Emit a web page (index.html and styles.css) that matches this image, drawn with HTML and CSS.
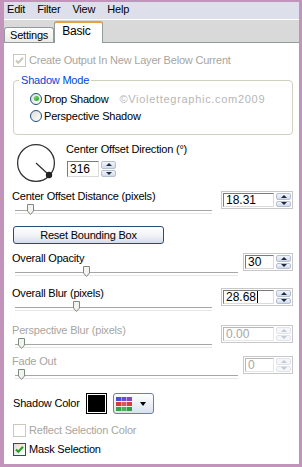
FILE: index.html
```html
<!DOCTYPE html>
<html lang="en">
<head>
  <meta charset="UTF-8">
  <meta name="viewport" content="width=device-width, initial-scale=1.0">
  <title>Drop Shadow - Basic</title>
  <link rel="stylesheet" href="styles.css">
</head>
<body>
  <div class="window">
    <div class="menubar">
      <span>Edit</span>
      <span>Filter</span>
      <span>View</span>
      <span>Help</span>
    </div>

    <div class="tabstrip">
      <div class="tab">Settings</div>
      <div class="tab active">Basic</div>
    </div>

    <div class="panel">
      <div class="check-row disabled">
        <span class="check">
          <svg viewBox="0 0 11 11"><path d="M2 5.5L4.3 7.8L9 2.8"/></svg>
        </span>
        <span>Create Output In New Layer Below Current</span>
      </div>

      <fieldset class="group">
        <legend>Shadow Mode</legend>
        <div class="radio-list">
          <div class="radio-row">
            <span class="radio on"></span>
            <span>Drop Shadow</span>
            <span class="watermark">©Violettegraphic.com2009</span>
          </div>
          <div class="radio-row">
            <span class="radio"></span>
            <span>Perspective Shadow</span>
          </div>
        </div>
      </fieldset>

      <div class="direction">
        <svg class="dial" viewBox="0 0 40 40">
          <circle cx="20" cy="20" r="18.4"/>
          <line x1="20" y1="20" x2="33" y2="32"/>
          <circle class="knob" cx="33" cy="32" r="3.2"/>
        </svg>
        <div class="direction-fields">
          <div class="label">Center Offset Direction (°)</div>
          <div class="spin dir">
            <div class="spin-value">316</div>
            <div class="spin-buttons"><span class="spin-btn up"></span><span class="spin-btn down"></span></div>
          </div>
        </div>
      </div>

      <div class="field wide distance">
        <div class="field-main">
          <div class="label">Center Offset Distance (pixels)</div>
          <div class="slider"><span class="thumb" style="left: 12px"><svg viewBox="0 0 7 11"><path d="M0.5 0.5H6.5V7L3.5 10.5L0.5 7Z"/></svg></span></div>
        </div>
        <div class="spin">
          <div class="spin-value">18.31</div>
          <div class="spin-buttons"><span class="spin-btn up"></span><span class="spin-btn down"></span></div>
        </div>
      </div>

      <button class="reset-button">Reset Bounding Box</button>

      <div class="field narrow opacity">
        <div class="field-head">
          <div class="label">Overall Opacity</div>
          <div class="spin">
            <div class="spin-value">30</div>
            <div class="spin-buttons"><span class="spin-btn up"></span><span class="spin-btn down"></span></div>
          </div>
        </div>
        <div class="slider"><span class="thumb" style="left: 68px"><svg viewBox="0 0 7 11"><path d="M0.5 0.5H6.5V7L3.5 10.5L0.5 7Z"/></svg></span></div>
      </div>

      <div class="field wide blur">
        <div class="field-main">
          <div class="label">Overall Blur (pixels)</div>
          <div class="slider"><span class="thumb" style="left: 58px"><svg viewBox="0 0 7 11"><path d="M0.5 0.5H6.5V7L3.5 10.5L0.5 7Z"/></svg></span></div>
        </div>
        <div class="spin">
          <div class="spin-value">28.68<span class="caret"></span></div>
          <div class="spin-buttons"><span class="spin-btn up"></span><span class="spin-btn down"></span></div>
        </div>
      </div>

      <div class="field wide disabled perspective">
        <div class="field-main">
          <div class="label">Perspective Blur (pixels)</div>
          <div class="slider"><span class="thumb" style="left: 3px"><svg viewBox="0 0 7 11"><path d="M0.5 0.5H6.5V7L3.5 10.5L0.5 7Z"/></svg></span></div>
        </div>
        <div class="spin">
          <div class="spin-value">0.00</div>
          <div class="spin-buttons"><span class="spin-btn up"></span><span class="spin-btn down"></span></div>
        </div>
      </div>

      <div class="field narrow disabled fade">
        <div class="field-head">
          <div class="label">Fade Out</div>
          <div class="spin">
            <div class="spin-value">0</div>
            <div class="spin-buttons"><span class="spin-btn up"></span><span class="spin-btn down"></span></div>
          </div>
        </div>
        <div class="slider"><span class="thumb" style="left: 3px"><svg viewBox="0 0 7 11"><path d="M0.5 0.5H6.5V7L3.5 10.5L0.5 7Z"/></svg></span></div>
      </div>

      <div class="color-row">
        <span class="label">Shadow Color</span>
        <span class="swatch"></span>
        <span class="picker">
          <svg class="palette" viewBox="0 0 16 14">
            <rect x="0" y="0" width="5" height="4" fill="#4a4fd6"/>
            <rect x="5.5" y="0" width="5" height="4" fill="#6a4ccc"/>
            <rect x="11" y="0" width="5" height="4" fill="#8a45c4"/>
            <rect x="0" y="5" width="5" height="4" fill="#d63a3a"/>
            <rect x="5.5" y="5" width="5" height="4" fill="#e0506a"/>
            <rect x="11" y="5" width="5" height="4" fill="#d6403a"/>
            <rect x="0" y="10" width="5" height="4" fill="#3aa04a"/>
            <rect x="5.5" y="10" width="5" height="4" fill="#4aae5a"/>
            <rect x="11" y="10" width="5" height="4" fill="#3a9a40"/>
          </svg>
          <span class="drop-arrow"></span>
        </span>
      </div>

      <div class="check-row disabled reflect">
        <span class="check off"></span>
        <span>Reflect Selection Color</span>
      </div>

      <div class="check-row mask">
        <span class="check">
          <svg viewBox="0 0 11 11"><path d="M2 5.5L4.3 7.8L9 2.8"/></svg>
        </span>
        <span>Mask Selection</span>
      </div>
    </div>
  </div>
</body>
</html>
```

FILE: styles.css
```css
* {
  margin: 0;
  padding: 0;
  box-sizing: border-box;
}

html,
body {
  height: 467px;
}

body {
  font-family: "Liberation Sans", Arial, sans-serif;
  font-size: 11px;
  letter-spacing: -0.2px;
  color: #000;
  background-color: #c293bb;
  padding: 2px 3px 3px 4px;
  overflow: hidden;
}

.window {
  height: 462px;
  background-color: #fff;
  overflow: hidden;
}

/* menu bar */
.menubar {
  height: 18px;
  display: flex;
  gap: 12px;
  padding: 1px 0 0 3px;
  line-height: 13px;
  background-color: #dde0ea;
  border-bottom: 1px solid #fff;
}

/* tabs */
.tabstrip {
  height: 23px;
  display: flex;
  align-items: flex-end;
  background-color: #d9d9d9;
  border-bottom: 1px solid #919b9c;
}

.tab {
  height: 15px;
  padding: 1px 5px 0;
  line-height: 13px;
  border: 1px solid #919b9c;
  border-bottom: none;
  border-radius: 3px 3px 0 0;
  background: linear-gradient(#fefefe, #ecebe6);
}

.tab.active {
  height: 22px;
  margin-bottom: -1px;
  padding: 2px 11px 0 7px;
  border-top: 2px solid #e8a040;
  background: #fff;
  font-size: 12px;
}

/* panel */
.panel {
  padding: 11px 6px 0 8px;
}

.label {
  line-height: 13px;
  white-space: nowrap;
}

.disabled .label,
.disabled > span,
.disabled .spin-value {
  color: #a7a6a0;
}

.check-row {
  display: flex;
  align-items: center;
  gap: 3px;
  height: 13px;
  padding-left: 1px;
  line-height: 13px;
}

.check {
  width: 13px;
  height: 13px;
  padding: 0 0 0 0;
  border: 1px solid #1c5180;
  background: linear-gradient(135deg, #dcdcd7, #fff);
}

.check svg {
  display: block;
  width: 11px;
  height: 11px;
  fill: none;
  stroke: #21a121;
  stroke-width: 2;
}

.disabled .check {
  border-color: #cac8bb;
  background: #fff;
}

.disabled .check svg {
  stroke: #cac8bb;
}

/* shadow mode group */
.group {
  margin: 7px 0 0 1px;
  padding: 0 0 10px 5px;
  border: 1px solid #d0d0bf;
  border-radius: 4px;
}

.group legend {
  padding: 0 2px;
  line-height: 13px;
  color: #0046d5;
}

.radio-list {
  margin-top: 3px;
  padding-left: 11px;
}

.radio-row {
  display: flex;
  align-items: center;
  gap: 2px;
  height: 17px;
}

.radio {
  position: relative;
  width: 12px;
  height: 12px;
  border: 1px solid #1c5180;
  border-radius: 50%;
  background: linear-gradient(135deg, #dcdcd7, #fff);
}

.radio.on::after {
  content: '';
  position: absolute;
  left: 2.5px;
  top: 2.5px;
  width: 5px;
  height: 5px;
  border-radius: 50%;
  background: radial-gradient(circle at 35% 35%, #64d664, #1e9a1e);
}

.watermark {
  margin-left: 9px;
  color: #b6b6b6;
  letter-spacing: 0.7px;
}

/* direction */
.direction {
  display: flex;
  margin-top: 8px;
}

.dial {
  width: 40px;
  height: 40px;
  margin-left: 4px;
  fill: none;
  stroke: #333;
  stroke-width: 1.3;
}

.dial .knob {
  fill: #222;
  stroke: none;
}

.direction-fields {
  margin-left: 10px;
}

/* spin boxes */
.spin {
  display: flex;
  gap: 2px;
  height: 18px;
  padding: 1px;
  border: 1px solid #c8c8c8;
  background: #fff;
}

.spin-value {
  flex: 1;
  display: flex;
  align-items: center;
  padding-left: 2px;
  border: 1px solid;
  border-color: #7b7b7b #dadada #dadada #7b7b7b;
  font-size: 12px;
  letter-spacing: 0;
}

.caret {
  width: 1px;
  height: 12px;
  margin-left: 1px;
  background: #000;
}

.spin-buttons {
  display: flex;
  flex-direction: column;
  gap: 1px;
  width: 15px;
}

.spin-btn {
  flex: 1;
  display: flex;
  align-items: center;
  justify-content: center;
  border: 1px solid #b4bfd2;
  border-radius: 2px;
  background: linear-gradient(#f2f5fb, #d3dbea);
}

.spin-btn::after {
  content: '';
  border-left: 3.5px solid transparent;
  border-right: 3.5px solid transparent;
}

.spin-btn.up::after {
  border-bottom: 3px solid #1f2a44;
}

.spin-btn.down::after {
  border-top: 3px solid #1f2a44;
}

.disabled .spin-btn {
  border-color: #e0e3ea;
  background: #f5f6f9;
}

.disabled .spin-btn.up::after {
  border-bottom-color: #c4c8d2;
}

.disabled .spin-btn.down::after {
  border-top-color: #c4c8d2;
}

.disabled .spin-value {
  border-color: #b8b8b8 #e6e6e6 #e6e6e6 #b8b8b8;
}

.spin.dir {
  width: 49px;
  height: 16px;
  margin: 5px 0 0 1px;
  padding: 0;
  border: none;
}

/* slider rows */
.field {
  margin-top: 8px;
}

.field.wide {
  display: flex;
  align-items: flex-start;
}

.field-main {
  flex: 1;
}

.field.wide .spin {
  width: 72px;
  margin: 1px 0 0 9px;
}

.field-head {
  display: flex;
  align-items: flex-start;
  justify-content: space-between;
  height: 13px;
}

.field-head .spin {
  width: 50px;
  margin-top: 1px;
}

.field.narrow .slider {
  margin-right: 55px;
}

.slider {
  position: relative;
  height: 14px;
  margin: 1px 0 0 3px;
}

.slider::before {
  content: '';
  position: absolute;
  left: 0;
  right: 0;
  top: 6px;
  height: 2px;
  border-top: 1px solid #a6a6a6;
  border-bottom: 1px solid #e6e6e6;
}

.thumb {
  position: absolute;
  top: 0;
  width: 7px;
  height: 11px;
}

.thumb svg {
  display: block;
  width: 7px;
  height: 11px;
  fill: #f3f3ef;
  stroke: #7d8a80;
  stroke-width: 1;
}

.field.distance {
  margin-top: 7px;
}

.field.opacity {
  margin-top: 8px;
}

.field.blur {
  margin-top: 7px;
}

.field.perspective {
  margin-top: 9px;
}

.field.fade {
  margin-top: 3px;
}

.reset-button {
  display: block;
  width: 151px;
  height: 18px;
  margin: 8px 0 0 1px;
  font-family: inherit;
  font-size: 11px;
  letter-spacing: -0.2px;
  color: #000;
  border: 1px solid #2c4a78;
  border-radius: 3px;
  background: linear-gradient(#fff, #f0f2f6 55%, #d6dce8);
}

/* colour row */
.color-row {
  display: flex;
  align-items: center;
  gap: 6px;
  height: 21px;
  margin-top: 10px;
  padding-left: 1px;
}

.swatch {
  width: 21px;
  height: 21px;
  border: 1px solid #000;
  background: #000;
  box-shadow: inset 0 0 0 1px #fff;
}

.picker {
  display: flex;
  align-items: center;
  gap: 8px;
  width: 41px;
  height: 21px;
  padding-left: 2px;
  border: 1px solid #6d7fa3;
  border-radius: 3px;
  background: linear-gradient(#fff, #dbe2ee);
}

.palette {
  width: 16px;
  height: 14px;
}

.drop-arrow {
  border-left: 3.5px solid transparent;
  border-right: 3.5px solid transparent;
  border-top: 4px solid #000;
}

.check-row.reflect {
  margin-top: 10px;
}

.check-row.mask {
  margin-top: 6px;
}
```
